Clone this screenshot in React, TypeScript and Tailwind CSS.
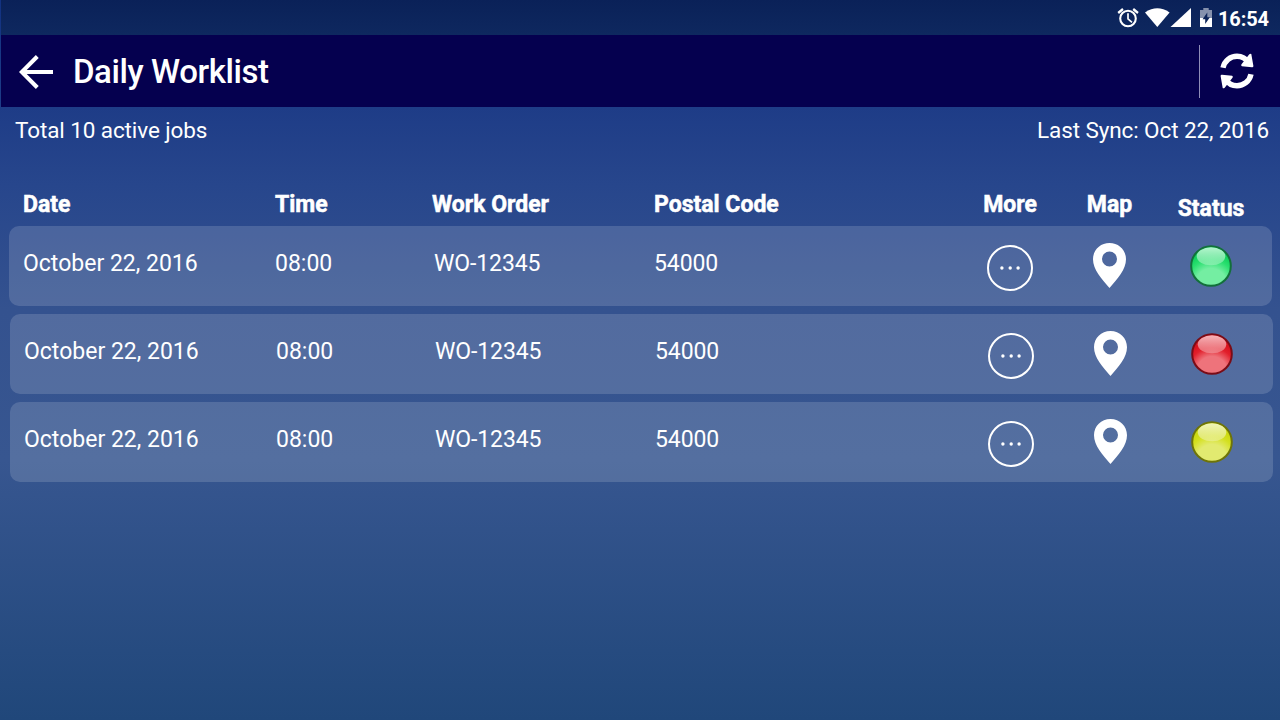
import React from "react";

type Status = "green" | "red" | "yellow";

interface Job {
  date: string;
  time: string;
  order: string;
  postal: string;
  status: Status;
}

const jobs: Job[] = [
  { date: "October 22, 2016", time: "08:00", order: "WO-12345", postal: "54000", status: "green" },
  { date: "October 22, 2016", time: "08:00", order: "WO-12345", postal: "54000", status: "red" },
  { date: "October 22, 2016", time: "08:00", order: "WO-12345", postal: "54000", status: "yellow" },
];

const palette: Record<Status, { rim: string; edge: string; mid: string; glow: string; shine: string }> = {
  green: { rim: "#12703a", edge: "#10d05c", mid: "#2ae070", glow: "#74eea2", shine: "#b4f5cd" },
  red: { rim: "#7a0c16", edge: "#d80f1c", mid: "#e2202c", glow: "#ee737b", shine: "#f6b4b8" },
  yellow: { rim: "#6e7408", edge: "#cbd80e", mid: "#d4e020", glow: "#e2ea70", shine: "#f0f4b8" },
};

function StatusLight({ status }: { status: Status }) {
  const c = palette[status];
  return (
    <svg className="h-[42px] w-[42px]" viewBox="0 0 42 42">
      <defs>
        <radialGradient id={`body-${status}`} cx="0.5" cy="0.95" r="0.78">
          <stop offset="0" stopColor={c.glow} />
          <stop offset="0.5" stopColor={c.glow} />
          <stop offset="0.78" stopColor={c.mid} />
          <stop offset="1" stopColor={c.edge} />
        </radialGradient>
        <linearGradient id={`shine-${status}`} x1="0" y1="0" x2="0" y2="1">
          <stop offset="0" stopColor={c.shine} />
          <stop offset="1" stopColor={c.shine} stopOpacity="0.45" />
        </linearGradient>
      </defs>
      <circle cx="21" cy="21" r="19.8" fill={`url(#body-${status})`} stroke={c.rim} strokeWidth="2" />
      <ellipse cx="21" cy="11.3" rx="14.3" ry="9" fill={`url(#shine-${status})`} />
    </svg>
  );
}

function MoreIcon() {
  return (
    <svg className="h-[46px] w-[46px]" viewBox="0 0 46 46" fill="#fff">
      <circle cx="23" cy="23" r="22" fill="none" stroke="#fff" strokeWidth="2" />
      <circle cx="14.9" cy="23" r="1.7" />
      <circle cx="23.2" cy="23" r="1.7" />
      <circle cx="31.1" cy="23" r="1.7" />
    </svg>
  );
}

function PinIcon() {
  return (
    <svg className="h-[45px] w-[33px]" viewBox="0 0 33 45" fill="#fff">
      <path
        fillRule="evenodd"
        d="M16.5 0C7.2 0 0 7 0 16.3C0 26.5 8.5 36 16.5 45C24.5 36 33 26.5 33 16.3C33 7 25.8 0 16.5 0ZM16.5 8.5A7.5 7.5 0 1 1 16.5 23.5A7.5 7.5 0 1 1 16.5 8.5Z"
      />
    </svg>
  );
}

function StatusBar() {
  return (
    <div className="ml-px flex h-[35px] items-center justify-end bg-linear-to-b from-[#0a2158] to-[#0e285f] pr-[11px]">
      <svg className="h-[35px] w-[100px]" viewBox="1116 0 100 35" fill="#fff">
        <g fill="none" stroke="#fff">
          <circle cx="1128" cy="18.5" r="7.8" strokeWidth="2.1" />
          <path d="M1118.2 13L1123 9M1138 13L1133.200 9" strokeWidth="2.3" />
          <path d="M1128 13.300V18.800L1132 22.300" strokeWidth="1.7" />
        </g>
        <path d="M1145 12.5C1149 9.5 1153.500 8.200 1157.300 8.200S1165.600 9.500 1169.600 12.500L1157.300 27Z" />
        <path d="M1191 8V27H1170.500Z" />
        <path d="M1203.300 8H1208.700V10H1212V18H1200V10H1203.300Z" fillOpacity="0.5" />
        <path d="M1200 18H1212V27H1200Z" />
        <path d="M1207.300 12.500L1202.600 19.300H1205.200V24L1209.900 17.200H1207.300Z" fill="#0c2459" />
      </svg>
      <span className="ml-[2px] pt-[2px] text-[20px] leading-none font-bold tracking-[-0.1px]">16:54</span>
    </div>
  );
}

function AppBar() {
  return (
    <header className="ml-px flex h-[72px] items-center bg-[#05004f]">
      <svg className="mt-[2px] ml-[18px] h-[34px] w-[34px]" viewBox="0 0 34 34" fill="none" stroke="#fff" strokeWidth="4.1">
        <path d="M34 17H3M18.3 1.5L2.8 17L18.3 32.5" />
      </svg>
      <h1 className="ml-[20px] pt-[2px] text-[33px] leading-[38px] font-medium tracking-[-0.42px]">Daily Worklist</h1>
      <div className="ml-auto h-[53px] w-px bg-[#8f8db8]" />
      <button className="mr-[26px] ml-[20px] h-[36px] w-[34px]" aria-label="Sync">
        <svg className="h-[36px] w-[34px]" viewBox="0 0 34 36">
          <g fill="none" stroke="#fff" strokeWidth="5.4">
            <path d="M3 14.8C4.5 7.5 10.5 3.2 17 3.2C22 3.2 26 5.7 28.5 9.5" />
            <path d="M31 21.2C29.5 28.5 23.5 32.8 17 32.8C12 32.8 8 30.3 5.5 26.5" />
          </g>
          <path d="M31.3 1.1L33.4 13Q33.4 14.3 32 14.2L21.9 13.3Q20.5 12.4 21.5 11.2L29.3 1.3Q30.7 0.2 31.3 1.1Z" fill="#fff" />
          <path d="M2.7 34.9L0.6 23Q0.6 21.7 2 21.8L12.1 22.7Q13.5 23.6 12.5 24.8L4.7 34.7Q3.3 35.8 2.7 34.9Z" fill="#fff" />
        </svg>
      </button>
    </header>
  );
}

const columns = "grid grid-cols-[252px_157px_222px_306px_100px_98px_106px] pl-[14px]";

function JobRow({ job, shifted }: { job: Job; shifted: boolean }) {
  return (
    <li
      className={`${columns} h-[80px] w-[1263px] rounded-[10px] bg-white/15 text-[23px] leading-[27px] ${shifted ? "ml-px" : ""}`}
    >
      <span className="pt-[24px]">{job.date}</span>
      <span className="pt-[24px]">{job.time}</span>
      <span className="pt-[24px] pl-[2px] tracking-[-0.1px]">{job.order}</span>
      <span className="pt-[24px] tracking-[-0.1px]">{job.postal}</span>
      <div className="flex justify-center pt-[19px]">
        <MoreIcon />
      </div>
      <div className="flex justify-center pt-[17px]">
        <PinIcon />
      </div>
      <div className="flex justify-center pt-[19px]">
        <StatusLight status={job.status} />
      </div>
    </li>
  );
}

export default function App() {
  return (
    <div className="h-[720px] w-[1280px] overflow-hidden bg-[linear-gradient(to_bottom,#123281_0px,#1e3c87_107px,#27468c_185px,#34528f_310px,#375690_460px,#20477a_720px)] font-['Roboto',sans-serif] text-white">
      <StatusBar />
      <AppBar />
      <div className="flex h-[84px] justify-between pt-[10px] pr-[11px] pl-[15px] text-[22.5px] leading-[26px]">
        <span className="tracking-[-0.1px]">Total 10 active jobs</span>
        <span className="tracking-[-0.1px]">Last Sync: Oct 22, 2016</span>
      </div>
      <main className="pl-[9px]">
        <div className={`${columns} h-[35px] text-[23px] leading-[27px] font-bold [-webkit-text-stroke:0.5px_white]`}>
          <span>Date</span>
          <span>Time</span>
          <span>Work Order</span>
          <span>Postal Code</span>
          <span className="text-center">More</span>
          <span className="pl-px text-center">Map</span>
          <span className="pt-[4px] text-center">Status</span>
        </div>
        <ul className="flex flex-col gap-[8px]">
          {jobs.map((job, i) => (
            <JobRow key={job.status} job={job} shifted={i > 0} />
          ))}
        </ul>
      </main>
    </div>
  );
}
